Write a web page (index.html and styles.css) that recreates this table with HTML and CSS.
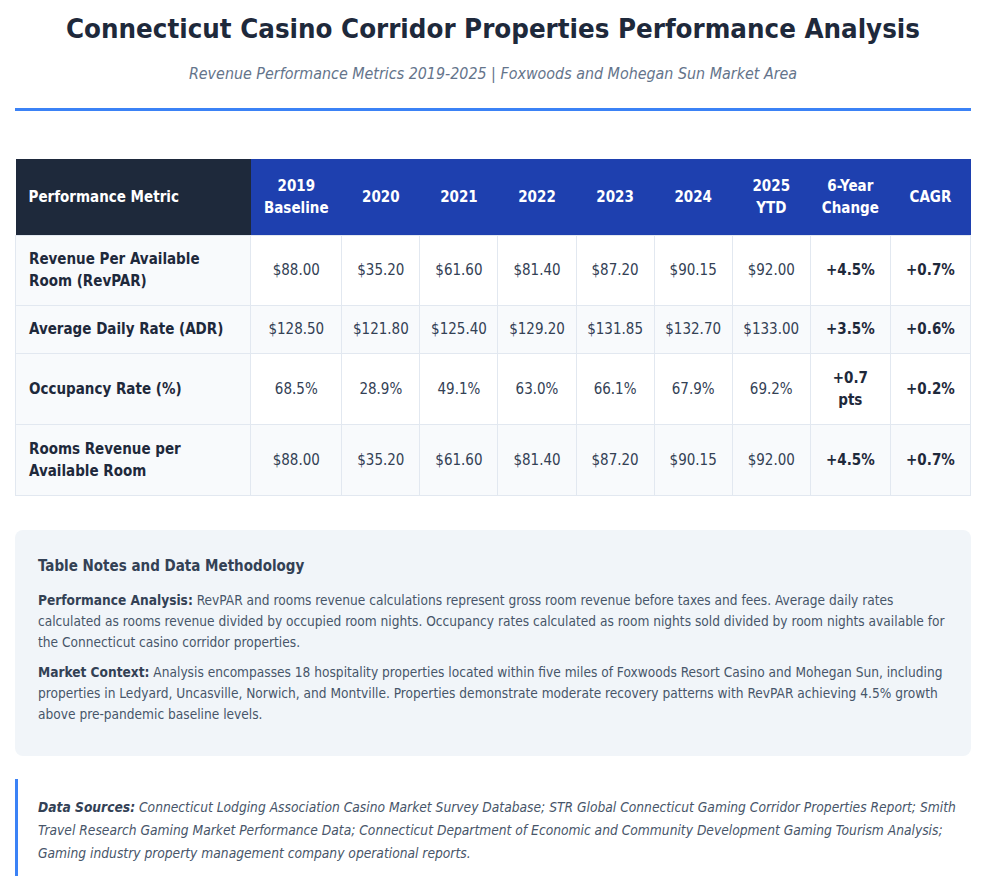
FILE: index.html
```html
<!DOCTYPE html>
<html lang="en">
<head>
<meta charset="utf-8">
<title>Connecticut Casino Corridor Properties Performance Analysis</title>
<link rel="stylesheet" href="styles.css">
</head>
<body>
<div class="page">
  <header class="header">
    <h1 class="title">Connecticut Casino Corridor Properties Performance Analysis</h1>
    <p class="subtitle">Revenue Performance Metrics 2019-2025 | Foxwoods and Mohegan Sun Market Area</p>
  </header>

  <table class="data">
    <colgroup>
      <col class="c-metric"><col class="c-base"><col class="c-y"><col class="c-y"><col class="c-y"><col class="c-y"><col class="c-y"><col class="c-y"><col class="c-chg"><col class="c-chg">
    </colgroup>
    <thead>
      <tr>
        <th class="metric-head">Performance Metric</th>
        <th>2019<br>Baseline</th>
        <th>2020</th>
        <th>2021</th>
        <th>2022</th>
        <th>2023</th>
        <th>2024</th>
        <th>2025<br>YTD</th>
        <th>6-Year<br>Change</th>
        <th>CAGR</th>
      </tr>
    </thead>
    <tbody>
      <tr>
        <td class="metric">Revenue Per Available Room (RevPAR)</td>
        <td>$88.00</td><td>$35.20</td><td>$61.60</td><td>$81.40</td><td>$87.20</td><td>$90.15</td><td>$92.00</td>
        <td class="strong">+4.5%</td><td class="strong">+0.7%</td>
      </tr>
      <tr>
        <td class="metric">Average Daily Rate (ADR)</td>
        <td>$128.50</td><td>$121.80</td><td>$125.40</td><td>$129.20</td><td>$131.85</td><td>$132.70</td><td>$133.00</td>
        <td class="strong">+3.5%</td><td class="strong">+0.6%</td>
      </tr>
      <tr>
        <td class="metric">Occupancy Rate (%)</td>
        <td>68.5%</td><td>28.9%</td><td>49.1%</td><td>63.0%</td><td>66.1%</td><td>67.9%</td><td>69.2%</td>
        <td class="strong">+0.7<br>pts</td><td class="strong">+0.2%</td>
      </tr>
      <tr>
        <td class="metric">Rooms Revenue per Available Room</td>
        <td>$88.00</td><td>$35.20</td><td>$61.60</td><td>$81.40</td><td>$87.20</td><td>$90.15</td><td>$92.00</td>
        <td class="strong">+4.5%</td><td class="strong">+0.7%</td>
      </tr>
    </tbody>
  </table>

  <section class="notes">
    <h2 class="notes-title">Table Notes and Data Methodology</h2>
    <p class="note"><strong>Performance Analysis:</strong> RevPAR and rooms revenue calculations represent gross room revenue before taxes and fees. Average daily rates calculated as rooms revenue divided by occupied room nights. Occupancy rates calculated as room nights sold divided by room nights available for the Connecticut casino corridor properties.</p>
    <p class="note"><strong>Market Context:</strong> Analysis encompasses 18 hospitality properties located within five miles of Foxwoods Resort Casino and Mohegan Sun, including properties in Ledyard, Uncasville, Norwich, and Montville. Properties demonstrate moderate recovery patterns with RevPAR achieving 4.5% growth above pre-pandemic baseline levels.</p>
  </section>

  <section class="sources">
    <p><strong>Data Sources:</strong> Connecticut Lodging Association Casino Market Survey Database; STR Global Connecticut Gaming Corridor Properties Report; Smith Travel Research Gaming Market Performance Data; Connecticut Department of Economic and Community Development Gaming Tourism Analysis; Gaming industry property management company operational reports.</p>
  </section>
</div>
</body>
</html>
```

FILE: styles.css
```css
* { box-sizing: border-box; }
html, body { margin: 0; padding: 0; background: #ffffff; }
body {
  font-family: "DejaVu Sans Condensed", "DejaVu Sans", Verdana, sans-serif;
  color: #1e293b;
}
.page {
  width: 956px;
  margin: 0 0 0 15px;
}
.header {
  text-align: center;
  border-bottom: 3px solid #3b82f6;
  padding: 11px 0 24px;
  margin-bottom: 48px;
}
.title {
  margin: 0;
  font-size: 27.4px;
  line-height: 36px;
  font-weight: 700;
  color: #1e293b;
}
.subtitle {
  margin: 17px 0 0;
  font-size: 15.9px;
  line-height: 20px;
  font-style: italic;
  color: #64748b;
}
.data {
  width: 100%;
  border-collapse: collapse;
  table-layout: fixed;
  font-size: 15px;
}
.c-metric { width: 235px; }
.c-base { width: 91px; }
.c-y { width: 78px; }
.c-chg { width: 80px; }
.data th {
  background: #1e40af;
  color: #ffffff;
  font-weight: 700;
  text-align: center;
  padding: 0 6px;
  height: 76px;
  line-height: 22px;
}
.data th.metric-head {
  background: #1e293b;
  text-align: left;
  padding-left: 13px;
}
.data td {
  border: 1px solid #e2e8f0;
  text-align: center;
  padding: 12px 4px;
  line-height: 22px;
  color: #334155;
  background: #ffffff;
}
.data tbody tr:nth-child(even) td { background: #f8fafc; }
.data td.metric {
  text-align: left;
  font-weight: 700;
  color: #1e293b;
  background: #f8fafc;
  padding-left: 13px;
  padding-right: 24px;
}
.data td.strong { font-weight: 700; color: #1e293b; }
.data tbody tr:nth-child(1) td { height: 70px; }
.data tbody tr:nth-child(2) td { height: 48px; }
.data tbody tr:nth-child(3) td { height: 71px; }
.data tbody tr:nth-child(4) td { height: 71px; }

.notes {
  margin-top: 34px;
  background: #f1f5f9;
  border-radius: 8px;
  padding: 25px 23px 31px;
}
.notes-title {
  margin: 0 0 13px;
  font-size: 15px;
  line-height: 22px;
  font-weight: 700;
  color: #334155;
}
.note {
  margin: 0 0 9px;
  font-size: 13.6px;
  line-height: 21px;
  color: #475569;
}
.note:last-child { margin-bottom: 0; }
.note strong { color: #334155; }
.sources {
  margin-top: 23px;
  border-left: 3px solid #3b82f6;
  padding: 17px 0 30px 20px;
}
.sources p {
  margin: 0;
  font-size: 13.7px;
  line-height: 23px;
  font-style: italic;
  color: #475569;
}
.sources strong { color: #334155; }
```
